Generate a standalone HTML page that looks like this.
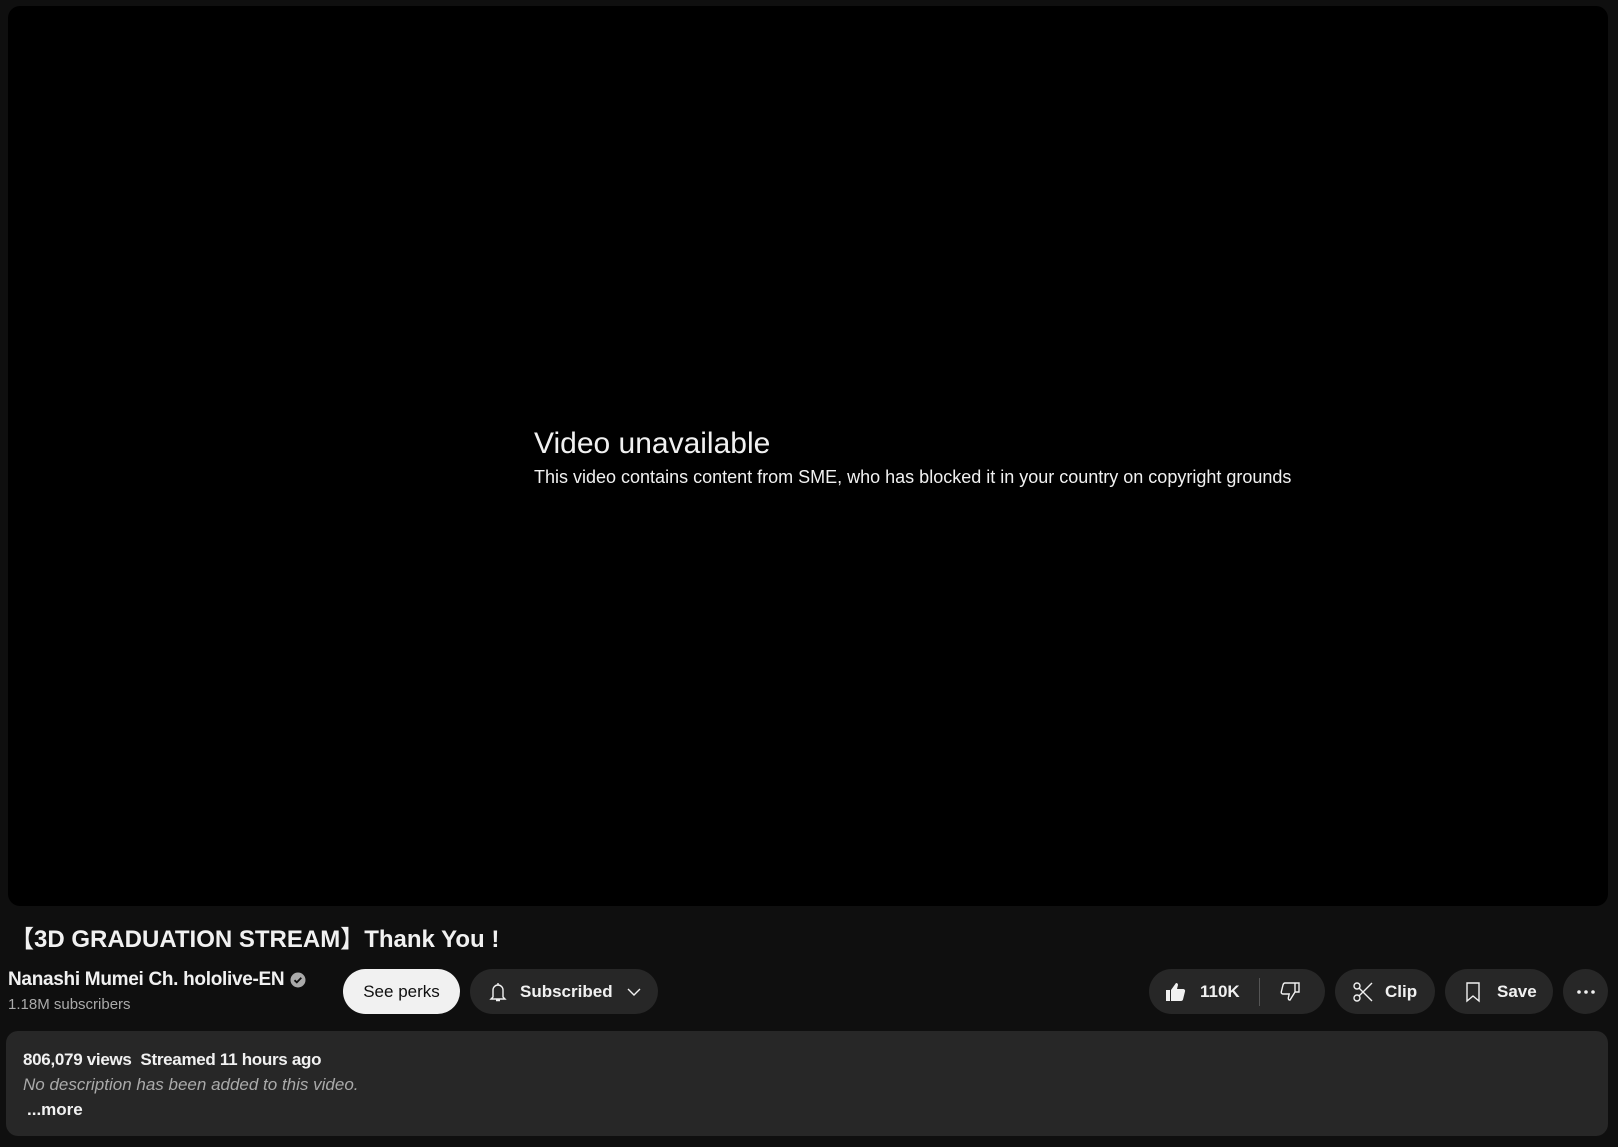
<!DOCTYPE html>
<html><head><style>
body{margin:0;width:1618px;height:1147px;background:#0f0f0f;font-family:"Liberation Sans",Roboto,sans-serif;color:#f1f1f1;position:relative;overflow:hidden}
.abs{position:absolute}
.video{left:8px;top:6px;width:1600px;height:900px;background:#000;border-radius:12px}
.pill{position:absolute;top:969px;height:45px;border-radius:23px;background:#272727;display:flex;align-items:center;font-weight:bold;font-size:17px;box-sizing:border-box}
svg{display:block}
</style></head><body>
<div class="abs video"></div>
<div class="abs" style="left:534px;top:427px;font-size:30px">Video unavailable</div>
<div class="abs" style="left:534px;top:467px;font-size:18px">This video contains content from SME, who has blocked it in your country on copyright grounds</div>
<div class="abs" style="left:10px;top:919px;font-size:24px;font-weight:bold;font-family:'Liberation Sans','Noto Sans CJK JP',sans-serif">【3D GRADUATION STREAM】Thank You !</div>
<div class="abs" style="left:8px;top:969px;font-size:19px;font-weight:bold;display:flex;align-items:center;letter-spacing:-0.3px">Nanashi Mumei Ch. hololive-EN
<svg width="16" height="16" viewBox="0 0 16 16" style="margin-left:6px"><circle cx="8" cy="8" r="7.5" fill="#aaa"/><path d="M4.5 8.2l2.3 2.2 4.5-4.6" stroke="#0f0f0f" stroke-width="1.8" fill="none"/></svg></div>
<div class="abs" style="left:8px;top:996px;font-size:15px;color:#aaa">1.18M subscribers</div>
<div class="pill" style="left:343px;width:117px;background:#f1f1f1;color:#0f0f0f;justify-content:center;font-weight:normal">See perks</div>
<div class="pill" style="left:470px;width:188px;padding-left:16px">
<svg width="24" height="24" viewBox="0 0 24 24"><path d="M12 3v1.5M7 17V10a5 5 0 0110 0v7l2 2H5z M10 20.5h4" stroke="#f1f1f1" stroke-width="1.4" fill="none"/></svg>
<span style="margin-left:10px">Subscribed</span>
<svg width="18" height="18" viewBox="0 0 18 18" style="margin-left:12px"><path d="M3 6l6 6 6-6" stroke="#f1f1f1" stroke-width="1.4" fill="none"/></svg></div>
<div class="pill" style="left:1149px;width:176px;padding-left:15px">
<svg width="24" height="24" viewBox="0 0 24 24"><path d="M2 10h4v11H2zM7 21V10l5-7c1.5 0 2 1 2 2l-1 4h6c1.5 0 2.5 1.2 2 2.5l-2 8c-.3 1-1 1.5-2 1.5z" fill="#f1f1f1"/></svg>
<span style="margin-left:12px">110K</span>
<div style="width:1px;height:28px;background:#555;margin-left:19px"></div>
<svg width="24" height="24" viewBox="0 0 24 24" style="margin-left:18px"><path d="M17 3h4v9h-4zM17 12l-5 8c-1 0-2-.5-1.7-2l.9-4H5c-1.2 0-2-1-1.7-2.2L5 5c.3-1 .8-2 2-2h10" stroke="#f1f1f1" stroke-width="1.4" fill="none"/></svg></div>
<div class="pill" style="left:1335px;width:100px;padding-left:16px">
<svg width="24" height="24" viewBox="0 0 24 24"><circle cx="6" cy="6" r="3" stroke="#f1f1f1" stroke-width="1.4" fill="none"/><circle cx="6" cy="18" r="3" stroke="#f1f1f1" stroke-width="1.4" fill="none"/><path d="M8 8l13 13M8 16L21 3" stroke="#f1f1f1" stroke-width="1.4"/></svg>
<span style="margin-left:10px">Clip</span></div>
<div class="pill" style="left:1445px;width:108px;padding-left:16px">
<svg width="24" height="24" viewBox="0 0 24 24"><path d="M6 3h12v18l-6-5-6 5z" stroke="#f1f1f1" stroke-width="1.4" fill="none"/></svg>
<span style="margin-left:12px">Save</span></div>
<div class="pill" style="left:1563px;width:45px;justify-content:center">
<svg width="24" height="24" viewBox="0 0 24 24"><circle cx="5" cy="12" r="1.8" fill="#f1f1f1"/><circle cx="12" cy="12" r="1.8" fill="#f1f1f1"/><circle cx="19" cy="12" r="1.8" fill="#f1f1f1"/></svg></div>
<div class="abs" style="left:6px;top:1031px;width:1602px;height:105px;background:#272727;border-radius:12px"></div>
<div class="abs" style="left:23px;top:1050px;font-size:17px;font-weight:bold;letter-spacing:-0.3px">806,079 views&nbsp; Streamed 11 hours ago</div>
<div class="abs" style="left:23px;top:1075px;font-size:17px;font-style:italic;color:#aaa">No description has been added to this video.</div>
<div class="abs" style="left:27px;top:1100px;font-size:17px;font-weight:bold">...more</div>
</body></html>
